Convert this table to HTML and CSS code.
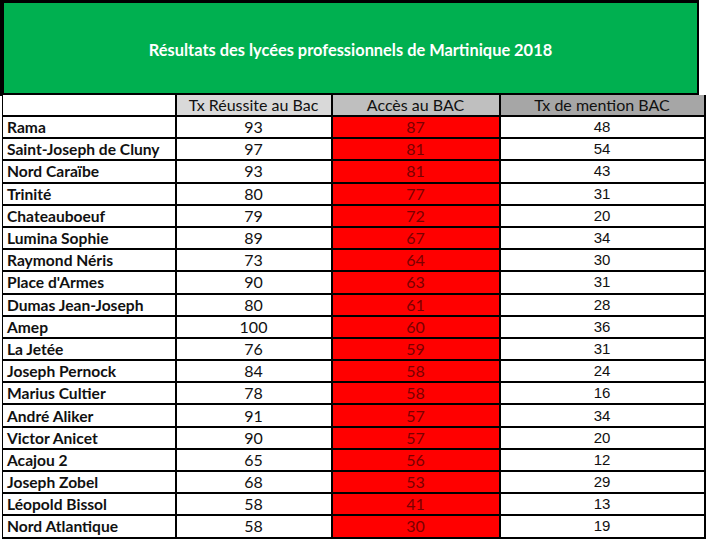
FILE: index.html
```html
<!DOCTYPE html>
<html lang="fr">
<head>
<meta charset="utf-8">
<link rel="stylesheet" href="styles.css">
</head>
<body>
<div class="banner"><h1 class="title">Résultats des lycées professionnels de Martinique 2018</h1></div>
<table class="grid">
<colgroup><col class="c1"><col class="c2"><col class="c3"><col class="c4"></colgroup>
<thead>
<tr><th class="h0"></th><th class="h1">Tx Réussite au Bac</th><th class="h2">Accès au BAC</th><th class="h3">Tx de mention BAC</th></tr>
</thead>
<tbody>
<tr><td class="name">Rama</td><td>93</td><td class="red">87</td><td class="num">48</td></tr>
<tr><td class="name">Saint-Joseph de Cluny</td><td>97</td><td class="red">81</td><td class="num">54</td></tr>
<tr><td class="name">Nord Caraïbe</td><td>93</td><td class="red">81</td><td class="num">43</td></tr>
<tr><td class="name">Trinité</td><td>80</td><td class="red">77</td><td class="num">31</td></tr>
<tr><td class="name">Chateauboeuf</td><td>79</td><td class="red">72</td><td class="num">20</td></tr>
<tr><td class="name">Lumina Sophie</td><td>89</td><td class="red">67</td><td class="num">34</td></tr>
<tr><td class="name">Raymond Néris</td><td>73</td><td class="red">64</td><td class="num">30</td></tr>
<tr><td class="name">Place d'Armes</td><td>90</td><td class="red">63</td><td class="num">31</td></tr>
<tr><td class="name">Dumas Jean-Joseph</td><td>80</td><td class="red">61</td><td class="num">28</td></tr>
<tr><td class="name">Amep</td><td>100</td><td class="red">60</td><td class="num">36</td></tr>
<tr><td class="name">La Jetée</td><td>76</td><td class="red">59</td><td class="num">31</td></tr>
<tr><td class="name">Joseph Pernock</td><td>84</td><td class="red">58</td><td class="num">24</td></tr>
<tr><td class="name">Marius Cultier</td><td>78</td><td class="red">58</td><td class="num">16</td></tr>
<tr><td class="name">André Aliker</td><td>91</td><td class="red">57</td><td class="num">34</td></tr>
<tr><td class="name">Victor Anicet</td><td>90</td><td class="red">57</td><td class="num">20</td></tr>
<tr><td class="name">Acajou 2</td><td>65</td><td class="red">56</td><td class="num">12</td></tr>
<tr><td class="name">Joseph Zobel</td><td>68</td><td class="red">53</td><td class="num">29</td></tr>
<tr><td class="name">Léopold Bissol</td><td>58</td><td class="red">41</td><td class="num">13</td></tr>
<tr><td class="name">Nord Atlantique</td><td>58</td><td class="red">30</td><td class="num">19</td></tr>
<tr class="tail"><td></td><td></td><td></td><td></td></tr>
</tbody>
</table>
</body>
</html>
```
FILE: styles.css
```css
html, body {
  margin: 0;
  padding: 0;
  background: #ffffff;
}
body {
  font-family: Lato, "Open Sans", sans-serif;
  color: #111;
  overflow: hidden;
}
.banner {
  box-sizing: border-box;
  width: 699px;
  height: 96px;
  background: #00b050;
  border-style: solid;
  border-color: #000;
  border-width: 3px 2px 3px 4px;
  display: flex;
  align-items: center;
  justify-content: center;
}
.title {
  margin: 0;
  color: #ffffff;
  font-size: 16.4px;
  font-weight: 700;
  padding-top: 2px;
}
.grid {
  margin-left: 2px;
  margin-top: -1px;
  width: 702px;
  border-collapse: collapse;
  table-layout: fixed;
  font-size: 16px;
}
.c1 { width: 173px; }
.c2 { width: 156px; }
.c3 { width: 168px; }
.c4 { width: 205px; }
.grid th, .grid td {
  border: 2px solid #000;
  height: 20.2px;
  padding: 0;
  text-align: center;
  line-height: 20px;
  white-space: nowrap;
  overflow: hidden;
}
.grid th {
  font-weight: 400;
  height: 19px;
}
.grid thead tr th {
  border-top: none;
}
.h0 { background: #fff; border-left: 1px solid #000 !important; }
.h1 { background: #d9d9d9; }
.h2 { background: #bfbfbf; }
.h3 { background: #a6a6a6; }
.grid td.name {
  text-align: left;
  padding-left: 4px;
  font-weight: 700;
  font-size: 15.6px;
}
.grid tbody td:first-child { border-left-width: 1px; }
.red {
  background: #ff0000;
  color: #7a0000;
}
.num {
  font-family: "Liberation Sans", Arial, sans-serif;
  font-size: 15px;
}
.tail td { height: 20px; }
```
